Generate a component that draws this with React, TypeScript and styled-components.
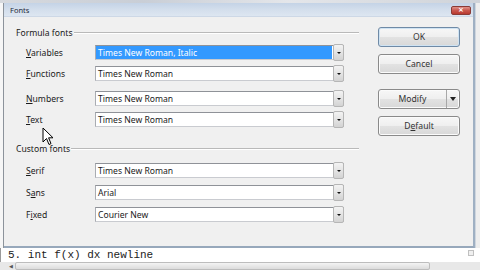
import React from 'react';
import styled, { createGlobalStyle } from 'styled-components';

const Global = createGlobalStyle`
  html, body { margin: 0; padding: 0; background: #f0f0f0; }
  body { width: 480px; height: 270px; overflow: hidden; font-family: "Noto Sans", "Liberation Sans", sans-serif; }
  * { box-sizing: border-box; }
`;

const Screen = styled.div`
  position: relative;
  width: 480px;
  height: 270px;
  overflow: hidden;
  display: flex;
  flex-direction: column;
  background: #f0f0f0;
`;

const TopStrip = styled.div`
  flex: none;
  height: 3px;
  background: linear-gradient(90deg, #d6d9de 0%, #c9ced6 30%, #e4e6ea 60%, #cfd3d9 100%);
`;

const Middle = styled.div`
  flex: none;
  height: 245px;
  display: flex;
`;

const LeftEdge = styled.div`
  flex: none;
  width: 4px;
  background: #f6f6f6;
  border-right: 1px solid #8c939b;
`;

const RightEdge = styled.div`
  flex: none;
  width: 5px;
  background: #eeeeee;
  border-left: 1px solid #cfd6de;
`;

const Dialog = styled.div`
  flex: none;
  width: 471px;
  display: flex;
  flex-direction: column;
  background: #f0f0f0;
  border-right: 2px solid #9fb0c3;
  border-bottom: 2px solid #97a8bb;
`;

const TitleBar = styled.div`
  flex: none;
  height: 14px;
  display: flex;
  align-items: center;
  justify-content: space-between;
  padding: 0 2px 0 6px;
  background: linear-gradient(180deg, #c4d3e6 0%, #d3deec 50%, #dde6f1 100%);
  border-bottom: 1px solid #cdd8e6;
`;

const TitleText = styled.span`
  font-size: 7.5px;
  color: #1e2a3a;
`;

const CloseButton = styled.div`
  width: 20px;
  height: 9px;
  margin-top: 2px;
  border-radius: 2px;
  background: linear-gradient(180deg, #e0928a 0%, #c9574d 50%, #b8392f 100%);
  border: 1px solid #8a3b36;
  color: #fff;
  font-size: 7px;
  line-height: 7px;
  text-align: center;
  font-family: "DejaVu Sans", sans-serif;
  font-weight: bold;
`;

const Content = styled.div`
  flex: 1;
  display: flex;
  padding: 11px 13px 0 12px;
`;

const LeftColumn = styled.div`
  width: 343px;
  display: flex;
  flex-direction: column;
`;

const ButtonColumn = styled.div`
  margin-left: 19px;
  width: 82px;
  display: flex;
  flex-direction: column;
  padding-top: -1px;
`;

const GroupHeader = styled.div<{ $mt: number }>`
  display: flex;
  align-items: center;
  height: 10px;
  margin-top: ${p => p.$mt}px;
  font-size: 8.6px;
  color: #1a1a1a;
  gap: 1px;
`;

const HeaderLine = styled.div`
  flex: 1;
  height: 2px;
  border-top: 1px solid #b9b9b9;
  border-bottom: 1px solid #ffffff;
`;

const Rows = styled.div<{ $mt: number; $gap: number }>`
  display: flex;
  flex-direction: column;
  gap: ${p => p.$gap}px;
  margin-top: ${p => p.$mt}px;
  padding-left: 10px;
`;

const Row = styled.div<{ $extra?: number }>`
  display: flex;
  align-items: center;
  height: 15px;
  margin-top: ${p => p.$extra ?? 0}px;
`;

const Label = styled.span`
  width: 69px;
  font-size: 8.6px;
  color: #1a1a1a;
  u { text-decoration: underline; text-underline-offset: 1px; }
`;

const Combo = styled.div`
  width: 249px;
  height: 15px;
  display: flex;
  align-items: stretch;
  background: #ffffff;
  border: 1px solid #c9cbd0;
  border-top-color: #8f9298;
  border-left-color: #a9acb2;
`;

const ComboText = styled.div<{ $selected?: boolean }>`
  flex: 1;
  display: flex;
  align-items: center;
  margin: 0 1px 0 0;
  padding-left: 2px;
  font-size: 8.6px;
  color: ${p => (p.$selected ? '#ffffff' : '#1a1a1a')};
  background: ${p => (p.$selected ? '#3399ff' : 'transparent')};
  white-space: nowrap;
`;

const DropButton = styled.div`
  flex: none;
  width: 11px;
  margin: -2px -1px -2px 0;
  display: flex;
  align-items: center;
  justify-content: center;
  background: linear-gradient(180deg, #f3f3f3 0%, #e4e4e4 50%, #d3d3d3 100%);
  border: 1px solid #b6b6b6;
  border-radius: 2px;
`;

const Arrow = styled.div`
  width: 0;
  height: 0;
  border-left: 2px solid transparent;
  border-right: 2px solid transparent;
  border-top: 2px solid #111;
`;

const Button = styled.div<{ $mt: number; $primary?: boolean }>`
  height: 20px;
  margin-top: ${p => p.$mt}px;
  display: flex;
  align-items: stretch;
  border: 1px solid ${p => (p.$primary ? '#6f8aa6' : '#8a8a8a')};
  border-radius: 3px;
  background: linear-gradient(180deg, #f7f7f7 0%, #efefef 48%, #e2e2e2 52%, #d8d8d8 100%);
  box-shadow: inset 0 0 0 1px ${p => (p.$primary ? '#cfe3f3' : '#fbfbfb')};
  font-size: 8.6px;
  color: #333;
  u { text-decoration: underline; text-underline-offset: 1px; }
`;

const ButtonLabel = styled.div`
  flex: 1;
  display: flex;
  align-items: center;
  justify-content: center;
`;

const SplitPart = styled.div`
  flex: none;
  width: 13px;
  display: flex;
  align-items: center;
  justify-content: center;
  border-left: 1px solid #a8a8a8;
`;

const SplitArrow = styled.div`
  width: 0;
  height: 0;
  border-left: 3px solid transparent;
  border-right: 3px solid transparent;
  border-top: 4px solid #222;
`;

const Editor = styled.div`
  flex: none;
  height: 14px;
  display: flex;
  align-items: center;
  justify-content: space-between;
  background: #ffffff;
  padding: 0 6px 0 7px;
  border-left: 1px solid #9a9a9a;
`;

const Formula = styled.span`
  font-family: "Liberation Mono", "Courier New", monospace;
  font-size: 11px;
  line-height: 14px;
  color: #222;
  white-space: pre;
`;

const EditorDrop = styled.div`
  width: 6px;
  height: 6px;
  margin-top: -4px;
  border: 1px solid #c0c0c0;
  background: #f0f0f0;
`;

const Scrollbar = styled.div`
  flex: none;
  height: 8px;
  display: flex;
  align-items: stretch;
  background: #e8e8e8;
  padding-left: 7px;
`;

const ScrollArrow = styled.div`
  width: 8px;
  display: flex;
  align-items: center;
  justify-content: center;
  color: #555;
  font-size: 5px;
`;

const Thumb = styled.div`
  width: 415px;
  border: 1px solid #bdbdbd;
  border-radius: 2px;
  background: linear-gradient(180deg, #f4f4f4 0%, #dcdcdc 100%);
`;

const Cursor = styled.svg`
  position: absolute;
  left: 42px;
  top: 127px;
`;

type RowDef = { label: React.ReactNode; value: string; selected?: boolean; extra?: number };

const formulaRows: RowDef[] = [
  { label: <><u>V</u>ariables</>, value: 'Times New Roman, Italic', selected: true },
  { label: <><u>F</u>unctions</>, value: 'Times New Roman' },
  { label: <><u>N</u>umbers</>, value: 'Times New Roman', extra: 4 },
  { label: <><u>T</u>ext</>, value: 'Times New Roman' },
];

const customRows: RowDef[] = [
  { label: <><u>S</u>erif</>, value: 'Times New Roman' },
  { label: <>S<u>a</u>ns</>, value: 'Arial' },
  { label: <>F<u>i</u>xed</>, value: 'Courier New' },
];

const FontRow = ({ row }: { row: RowDef }) => (
  <Row $extra={row.extra}>
    <Label>{row.label}</Label>
    <Combo>
      <ComboText $selected={row.selected}>{row.value}</ComboText>
      <DropButton>
        <Arrow />
      </DropButton>
    </Combo>
  </Row>
);

export default function App() {
  return (
    <Screen>
      <Global />
      <TopStrip />
      <Middle>
        <LeftEdge />
        <Dialog>
          <TitleBar>
            <TitleText>Fonts</TitleText>
            <CloseButton>×</CloseButton>
          </TitleBar>
          <Content>
            <LeftColumn>
              <GroupHeader $mt={0}>
                <span>Formula fonts</span>
                <HeaderLine />
              </GroupHeader>
              <Rows $mt={7} $gap={6}>
                {formulaRows.map((r, i) => (
                  <FontRow key={i} row={r} />
                ))}
              </Rows>
              <GroupHeader $mt={17}>
                <span>Custom fonts</span>
                <HeaderLine />
              </GroupHeader>
              <Rows $mt={9} $gap={7}>
                {customRows.map((r, i) => (
                  <FontRow key={i} row={r} />
                ))}
              </Rows>
            </LeftColumn>
            <ButtonColumn>
              <Button $mt={-1} $primary>
                <ButtonLabel>OK</ButtonLabel>
              </Button>
              <Button $mt={7}>
                <ButtonLabel>Cancel</ButtonLabel>
              </Button>
              <Button $mt={15}>
                <ButtonLabel>Modify</ButtonLabel>
                <SplitPart>
                  <SplitArrow />
                </SplitPart>
              </Button>
              <Button $mt={7}>
                <ButtonLabel>D<u>e</u>fault</ButtonLabel>
              </Button>
            </ButtonColumn>
          </Content>
        </Dialog>
        <RightEdge />
      </Middle>
      <Editor>
        <Formula>5. int f(x) dx newline</Formula>
        <EditorDrop />
      </Editor>
      <Scrollbar>
        <ScrollArrow>◀</ScrollArrow>
        <Thumb />
      </Scrollbar>
      <Cursor width="12" height="19" viewBox="0 0 12 19">
        <path d="M1 1 L1 15 L4.5 11.5 L7 17.5 L9 16.6 L6.6 10.8 L11 10.8 Z" fill="#ffffff" stroke="#000000" strokeWidth="1" strokeLinejoin="round" />
      </Cursor>
    </Screen>
  );
}
